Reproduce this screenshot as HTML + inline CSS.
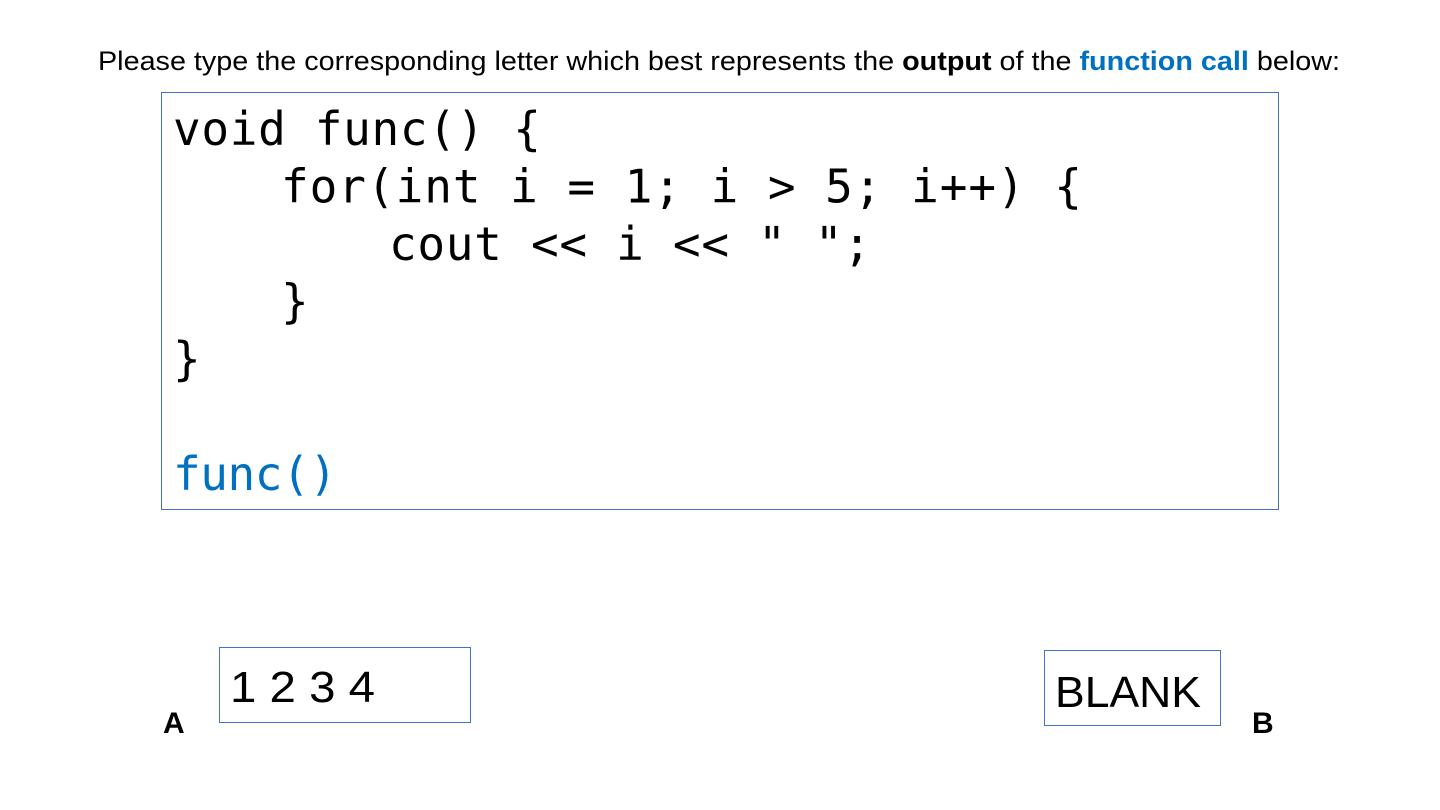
<!DOCTYPE html>
<html><head><meta charset="utf-8"><style>
html,body{margin:0;padding:0;background:#fff;width:1440px;height:810px;overflow:hidden}
</style></head><body>
<svg width="1440" height="810" xmlns="http://www.w3.org/2000/svg">
<text x="98" y="70" font-family="Liberation Sans, sans-serif" font-size="27" textLength="1242" lengthAdjust="spacingAndGlyphs" fill="#000">Please type the corresponding letter which best represents the <tspan font-weight="bold">output</tspan> of the <tspan font-weight="bold" fill="#0070C0">function call</tspan> below:</text>
<rect x="161.5" y="92.5" width="1117" height="417" fill="none" stroke="#4472C4" stroke-width="1"/>
<g font-family="DejaVu Sans Mono, Liberation Mono, monospace" font-size="46" fill="#000" xml:space="preserve" lengthAdjust="spacing">
<text x="173" y="145" textLength="368">void func() {</text>
<text x="281" y="202.5" textLength="801">for(int i = 1; i &gt; 5; i++) {</text>
<text x="389" y="260" textLength="482">cout &lt;&lt; i &lt;&lt; " ";</text>
<text x="281" y="317.5">}</text>
<text x="173" y="375">}</text>
<text x="173" y="490" fill="#0070C0" textLength="164">func()</text>
</g>
<rect x="219.5" y="647.5" width="251" height="75" fill="none" stroke="#4472C4"/>
<text x="230" y="702" font-family="Liberation Sans, sans-serif" font-size="44" textLength="145" lengthAdjust="spacingAndGlyphs">1 2 3 4</text>
<text x="163" y="733" font-family="Liberation Sans, sans-serif" font-weight="bold" font-size="30">A</text>
<rect x="1044.5" y="650.5" width="176" height="75" fill="none" stroke="#4472C4"/>
<text x="1055" y="707" font-family="Liberation Sans, sans-serif" font-size="44" textLength="146" lengthAdjust="spacingAndGlyphs">BLANK</text>
<text x="1252" y="733" font-family="Liberation Sans, sans-serif" font-weight="bold" font-size="30">B</text>
</svg>
</body></html>
